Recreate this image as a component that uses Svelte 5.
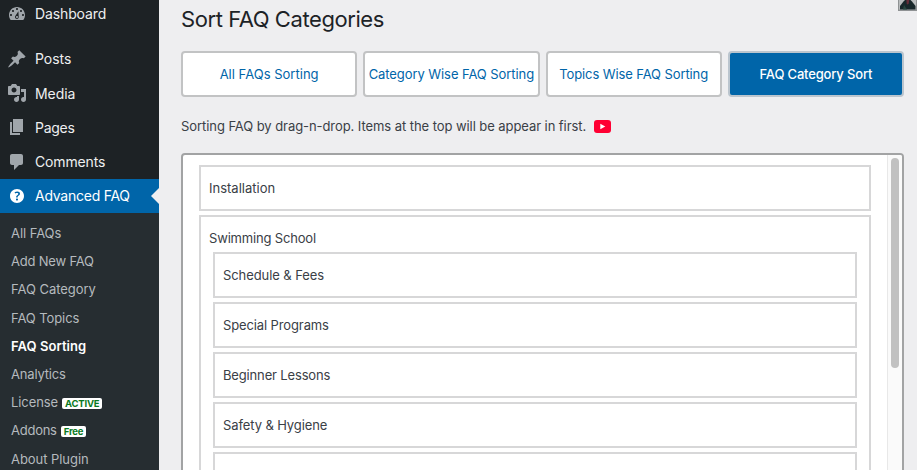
<script>
  const menu = [
    { label: 'Dashboard', track: -0.117, icon: 'M3.76 16h12.48c1.1-1.37 1.76-3.11 1.76-5 0-4.42-3.58-8-8-8s-8 3.58-8 8c0 1.89.66 3.63 1.76 5zM10 4c.55 0 1 .45 1 1s-.45 1-1 1-1-.45-1-1 .45-1 1-1zM6 6c.55 0 1 .45 1 1s-.45 1-1 1-1-.45-1-1 .45-1 1-1zm8 0c.55 0 1 .45 1 1s-.45 1-1 1-1-.45-1-1 .45-1 1-1zm-2.6 1.3L11.7 13c0 1.1-.7 2-1.7 2s-2-.9-2-2c0-.57.24-1.08.63-1.45zM4 10c.55 0 1 .45 1 1s-.45 1-1 1-1-.45-1-1 .45-1 1-1zm12 0c.55 0 1 .45 1 1s-.45 1-1 1-1-.45-1-1 .45-1 1-1zm-5 3c0-.55-.45-1-1-1s-1 .45-1 1 .45 1 1 1 1-.45 1-1z' },
    { label: 'Posts', track: -0.023, icon: 'M10.44 3.02l1.82-1.82 6.36 6.35-1.83 1.82c-1.05-.68-2.48-.57-3.41.36l-.75.75c-.92.93-1.04 2.35-.35 3.41l-1.83 1.82-2.41-2.41-2.8 2.79c-.42.42-3.38 2.71-3.8 2.29s1.86-3.39 2.28-3.81l2.79-2.79L4.1 9.36l1.83-1.82c1.05.69 2.48.57 3.4-.36l.75-.75c.93-.92 1.05-2.35.36-3.41z' },
    { label: 'Media', track: -0.068, icon: 'M13 11V4c0-.55-.45-1-1-1h-1.67L9 1H5L3.67 3H2c-.55 0-1 .45-1 1v7c0 .55.45 1 1 1h10c.55 0 1-.45 1-1zM7 4.5c1.38 0 2.5 1.12 2.5 2.5S8.38 9.5 7 9.5 4.5 8.38 4.5 7 5.62 4.5 7 4.5zM14 6h5v10.5c0 1.38-1.12 2.5-2.5 2.5S14 17.88 14 16.5s1.12-2.5 2.5-2.5c.17 0 .34.02.5.05V9h-3V6zm-4 8.05V13h2v3.5c0 1.38-1.12 2.5-2.5 2.5S7 17.88 7 16.5 8.12 14 9.5 14c.17 0 .34.02.5.05z' },
    { label: 'Pages', track: -0.263, icon: 'M6 15V2h10v13H6zm-1 1h8v2H3V5h2v11z' },
    { label: 'Comments', track: -0.146, icon: 'M5 2h9c1.1 0 2 .9 2 2v7c0 1.1-.9 2-2 2h-2l-5 5v-5H5c-1.1 0-2-.9-2-2V4c0-1.1.9-2 2-2z' },
    { label: 'Advanced FAQ', track: -0.25, active: true, icon: 'M17 10c0-3.87-3.14-7-7-7-3.87 0-7 3.13-7 7s3.13 7 7 7c3.86 0 7-3.13 7-7zm-6.3 1.48H9.14v-.43c0-.38.08-.7.24-.98s.46-.57.88-.89c.41-.29.68-.53.81-.71.14-.18.2-.39.2-.62 0-.25-.09-.44-.28-.58-.19-.13-.45-.19-.79-.19-.58 0-1.25.15-2 .46l-.64-1.28c.87-.49 1.8-.74 2.77-.74.81 0 1.45.2 1.92.58.48.39.71.91.71 1.55 0 .43-.09.8-.29 1.11-.19.32-.57.67-1.11 1.06-.38.28-.61.49-.71.63-.1.15-.15.34-.15.57v.46zm-1.47 2.74c-.18-.17-.27-.42-.27-.73 0-.33.08-.58.26-.75s.43-.25.77-.25c.32 0 .57.09.75.26s.27.42.27.74c0 .3-.09.55-.27.72-.18.18-.43.27-.75.27-.33 0-.58-.09-.76-.26z' }
  ];
  const submenu = [
    { label: 'All FAQs', track: -0.054 },
    { label: 'Add New FAQ', track: -0.2 },
    { label: 'FAQ Category', track: -0.044 },
    { label: 'FAQ Topics', track: -0.091 },
    { label: 'FAQ Sorting', track: 0.056, current: true },
    { label: 'Analytics', track: -0.186 },
    { label: 'License', track: -0.091, badge: 'ACTIVE' },
    { label: 'Addons', track: -0.25, badge: 'Free' },
    { label: 'About Plugin', track: -0.053 }
  ];
  const tabs = [
    { label: 'All FAQs Sorting', track: 0.019 },
    { label: 'Category Wise FAQ Sorting', track: -0.076 },
    { label: 'Topics Wise FAQ Sorting', track: -0.1 },
    { label: 'FAQ Category Sort', track: -0.163, active: true }
  ];
  const categories = [
    { label: 'Installation', track: 0, children: [] },
    {
      label: 'Swimming School',
      track: -0.172,
      children: [
        { label: 'Schedule & Fees', track: -0.08 },
        { label: 'Special Programs', track: -0.12 },
        { label: 'Beginner Lessons', track: -0.155 },
        { label: 'Safety & Hygiene', track: -0.1 },
        { label: '', track: 0 }
      ]
    }
  ];
</script>

{#snippet text(item)}<span style="letter-spacing: {item.track}px">{item.label}</span>{/snippet}

<div class="screen">
  <aside>
    <nav class="menu">
      {#each menu as item, i}
        <div class="item" class:active={item.active} class:first={i === 0}>
          <svg viewBox="0 0 20 20" width="20" height="20"><path fill-rule="evenodd" d={item.icon} /></svg>
          {@render text(item)}
        </div>
      {/each}
    </nav>
    <nav class="sub">
      {#each submenu as item}
        <div class="subitem" class:current={item.current}>
          {@render text(item)}
          {#if item.badge}<b>{item.badge}</b>{/if}
        </div>
      {/each}
    </nav>
  </aside>

  <main>
    <svg class="avatar" viewBox="0 0 19 11" width="19" height="11">
      <rect width="19" height="11" fill="#8f9294" />
      <rect x="1" width="17" height="9.6" fill="#b9bcbd" />
      <path d="M2 9.6V6L5.500 1.500 7 0h5.500l1.500 1.500L17.500 6v3.600z" fill="#18272a" />
      <path d="M8.300 0h3l-.6 3.200-1 1.600-1-1.600z" fill="#642c38" />
      <path d="M6 5l3 4.600H5z" fill="#27463f" />
    </svg>
    <h1>Sort FAQ Categories</h1>
    <div class="tabs">
      {#each tabs as tab}
        <div class="tab" class:on={tab.active}>{@render text(tab)}</div>
      {/each}
    </div>
    <p class="hint">
      <span>Sorting FAQ by drag-n-drop. Items at the top will be appear in first.</span>
      <svg viewBox="0 0 17 13" width="17" height="13">
        <rect width="17" height="13" rx="3" fill="#ff0033" />
        <path d="M6.300 3.800l5 2.700-5 2.700z" fill="#fff" />
      </svg>
    </p>
    <div class="panel">
      <div class="cards">
        {#each categories as cat}
          <div class="card">
            <div class="name">{@render text(cat)}</div>
            {#if cat.children.length}
              <div class="nested">
                {#each cat.children as child}
                  <div class="card"><div class="name">{@render text(child)}</div></div>
                {/each}
              </div>
            {/if}
          </div>
        {/each}
      </div>
      <div class="track"><div class="thumb"></div></div>
    </div>
  </main>
</div>

<style>
  .screen {
    display: flex;
    width: 917px;
    height: 470px;
    overflow: hidden;
    background: #eeeef0;
    font-family: Inter, "Liberation Sans", sans-serif;
    font-size: 13px;
    color: #3a4046;
  }
  span { white-space: nowrap; }
  aside {
    flex: none;
    width: 159px;
    display: flex;
    flex-direction: column;
    background: #1d2225;
  }
  .menu { height: 216px; flex: none; margin-top: -3px; }
  .item {
    display: flex;
    align-items: center;
    height: 34.250px;
    padding-left: 7px;
    gap: 8px;
    font-size: 14px;
    color: #eeeff0;
    fill: #a0a6ab;
  }
  .item.first { height: 33.500px; margin-bottom: 11.250px; }
  .item.active {
    position: relative;
    height: 34px;
    background: #0065a9;
    color: #fff;
    fill: #fff;
  }
  .item.active::after {
    content: "";
    position: absolute;
    right: 0;
    top: 9px;
    border: 8px solid transparent;
    border-left-width: 0;
    border-right-color: #eeeef0;
  }
  .sub {
    flex: 1;
    padding: 6px 0 0 11px;
    background: #262d31;
    color: #b5babe;
  }
  .subitem { display: flex; align-items: center; height: 28.200px; }
  .current { color: #fff; font-weight: 600; }
  b {
    margin: 2px 0 0 4px;
    padding: 0 3px;
    height: 11px;
    line-height: 11.500px;
    border-radius: 2px;
    background: #fff;
    color: #0a7a1e;
    font-size: 9.500px;
    letter-spacing: -0.200px;
  }
  main {
    flex: 1;
    position: relative;
    display: flex;
    flex-direction: column;
    padding: 0 13px 0 22px;
  }
  .avatar { position: absolute; right: 0; top: 0; }
  h1 {
    margin: 5px 0 18px;
    font-size: 22px;
    font-weight: 400;
    line-height: 28px;
    letter-spacing: -0.430px;
    color: #1d2327;
  }
  .tabs { display: flex; gap: 6px; flex: none; }
  .tab {
    flex: 1 1 0;
    min-width: 0;
    height: 46px;
    box-sizing: border-box;
    display: flex;
    align-items: center;
    justify-content: center;
    border: 2px solid #c2c3c4;
    border-radius: 4px;
    background: #fff;
    color: #0065a9;
  }
  .tab.on { background: #0065a9; border-color: #bbc5ce; color: #fff; font-weight: 500; }
  .hint {
    display: flex;
    align-items: center;
    gap: 8px;
    margin: 19px 0;
    height: 20px;
    padding: 1px 0;
    box-sizing: content-box;
    flex: none;
    height: 18px;
    letter-spacing: -0.069px;
  }
  .panel {
    display: flex;
    justify-content: space-between;
    height: 340px;
    margin-top: -2px;
    flex: none;
    box-sizing: border-box;
    border: 2px solid #a2a3a4;
    border-radius: 4px;
    background: #fff;
    overflow: hidden;
  }
  .cards { width: 672px; padding: 10px 0 0 16px; }
  .card {
    box-sizing: border-box;
    margin-bottom: 4px;
    border: 2px solid #d7d7d8;
    background: #fff;
  }
  .name { display: flex; align-items: center; height: 42px; padding-left: 8px; }
  .nested { margin-top: -7px; padding: 0 12px; }
  .track {
    width: 15px;
    padding-top: 3px;
    box-sizing: border-box;
    border-left: 1px solid #e8e8e8;
    background: #fafafa;
  }
  .thumb { width: 8px; height: 210px; margin-left: 3px; border-radius: 4px; background: #c1c1c1; }
</style>
